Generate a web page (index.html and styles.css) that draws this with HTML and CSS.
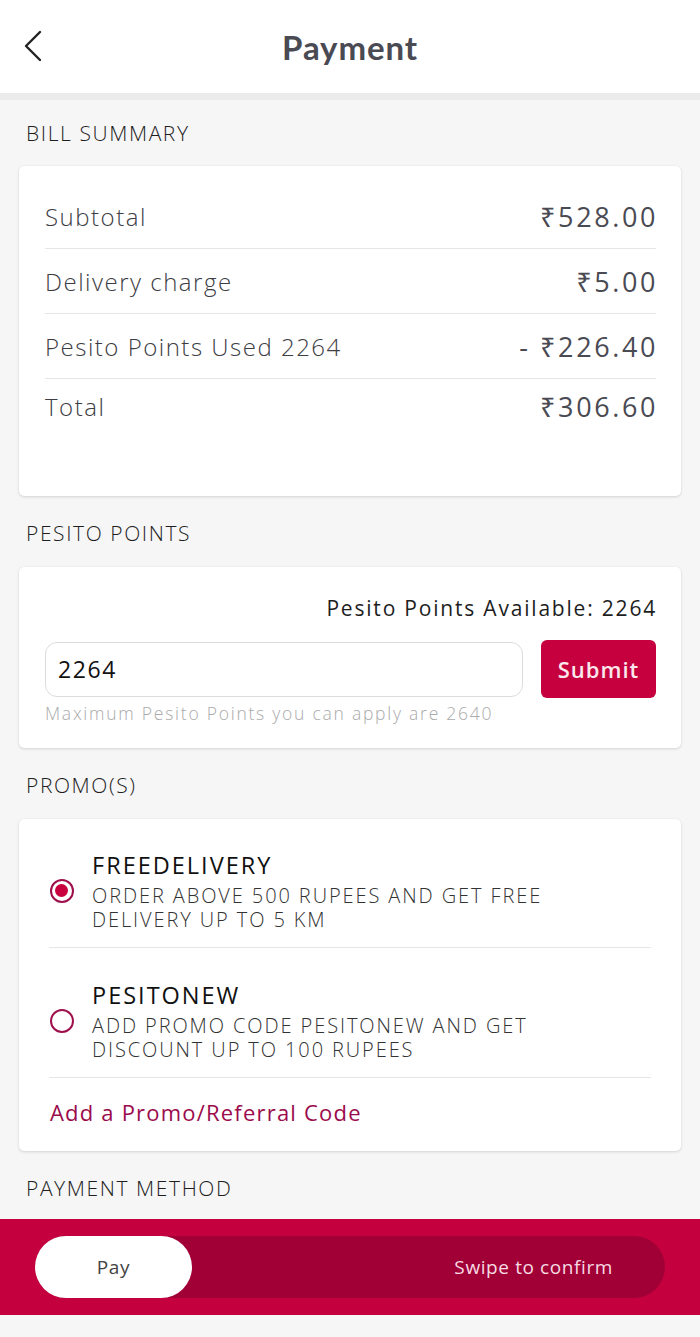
FILE: index.html
```html
<!DOCTYPE html>
<html lang="en">
<head>
<meta charset="utf-8">
<title>Payment</title>
<link rel="stylesheet" href="styles.css">
</head>
<body>
<div class="screen">
  <header class="topbar">
    <button class="back" aria-label="Back">
      <svg width="24" height="34" viewBox="0 0 24 34"><path d="M17 3 L3 17 L17 31" fill="none" stroke="#222" stroke-width="2.4" stroke-linecap="round" stroke-linejoin="round"/></svg>
    </button>
    <h1 class="title">Payment</h1>
  </header>

  <main class="content">
    <div class="section-title first">BILL SUMMARY</div>
    <section class="card bill">
      <div class="bill-row"><span class="label">Subtotal</span><span class="value">₹528.00</span></div>
      <div class="bill-row"><span class="label">Delivery charge</span><span class="value">₹5.00</span></div>
      <div class="bill-row"><span class="label">Pesito Points Used 2264</span><span class="value">- ₹226.40</span></div>
      <div class="bill-row last"><span class="label">Total</span><span class="value">₹306.60</span></div>
    </section>

    <div class="section-title">PESITO POINTS</div>
    <section class="card points">
      <div class="available">Pesito Points Available: 2264</div>
      <div class="points-row">
        <div class="input">2264</div>
        <button class="submit">Submit</button>
      </div>
      <div class="helper">Maximum Pesito Points you can apply are 2640</div>
    </section>

    <div class="section-title">PROMO(S)</div>
    <section class="card promos">
      <div class="promo first-promo">
        <span class="radio checked"></span>
        <div class="promo-text">
          <div class="promo-name">FREEDELIVERY</div>
          <div class="promo-desc">ORDER ABOVE 500 RUPEES AND GET FREE</div>
          <div class="promo-desc">DELIVERY UP TO 5 KM</div>
        </div>
      </div>
      <div class="promo">
        <span class="radio"></span>
        <div class="promo-text">
          <div class="promo-name">PESITONEW</div>
          <div class="promo-desc">ADD PROMO CODE PESITONEW AND GET</div>
          <div class="promo-desc">DISCOUNT UP TO 100 RUPEES</div>
        </div>
      </div>
      <div class="promo-link">Add a Promo/Referral Code</div>
    </section>

    <div class="section-title last-title">PAYMENT METHOD</div>
  </main>

  <footer class="paybar">
    <div class="track">
      <div class="thumb">Pay</div>
      <div class="swipe">Swipe to confirm</div>
    </div>
  </footer>
</div>
</body>
</html>
```

FILE: styles.css
```css
* { box-sizing: border-box; }
html, body { margin: 0; padding: 0; }
body {
  background: #f6f6f6;
  font-family: "Open Sans", "Noto Sans", "DejaVu Sans", sans-serif;
  font-weight: 300;
  color: #222;
  width: 700px;
  min-height: 1337px;
}
.screen { width: 700px; }

.topbar {
  height: 100px;
  background: #fff;
  border-bottom: 7px solid #ebebeb;
  display: flex;
  align-items: center;
  justify-content: center;
  position: relative;
}
.back {
  position: absolute;
  left: 23px;
  top: 29px;
  border: 0;
  background: none;
  padding: 0;
  width: 24px;
  height: 34px;
}
.title {
  margin: 0;
  font-family: "Lato", "Open Sans", sans-serif;
  font-weight: 700;
  font-size: 33px;
  color: #4a4a53;
  letter-spacing: 0.9px;
}

.section-title {
  font-size: 21px;
  line-height: 24px;
  padding: 25px 26px 22px;
  color: #1e1e1e;
  letter-spacing: 1.6px;
}
.section-title.first { padding-top: 21px; padding-bottom: 21px; }
.section-title.last-title { padding-bottom: 19px; }

.card {
  margin: 0 19px;
  background: #fff;
  border-radius: 5px;
  box-shadow: 0 1px 3px rgba(0,0,0,0.14), 0 0 1px rgba(0,0,0,0.08);
}

.bill { padding: 18px 25px 63px 26px; }
.bill-row {
  height: 65px;
  display: flex;
  align-items: center;
  justify-content: space-between;
  border-bottom: 1.5px solid #e6e6e6;
}
.bill-row.last { height: 54px; border-bottom: 0; }
.bill-row .label { font-size: 24px; color: #3d3d44; letter-spacing: 1.5px; }
.bill-row .value { font-size: 27px; color: #4a4a53; font-weight: 400; letter-spacing: 2.6px; margin-right: -2px; }

.points { padding: 28px 25px 25px 26px; }
.available { text-align: right; font-size: 21px; line-height: 26px; color: #1e1e1e; font-weight: 400; letter-spacing: 1.8px; margin-right: -1px; }
.points-row { margin-top: 19px; display: flex; align-items: center; gap: 18px; height: 58px; }
.input {
  flex: 1;
  height: 55px;
  border: 1.5px solid #dcdcdc;
  border-radius: 12px;
  display: flex;
  align-items: center;
  padding-left: 12px;
  font-size: 23px;
  font-weight: 400;
  letter-spacing: 1.6px;
  color: #111;
}
.submit {
  width: 115px;
  height: 58px;
  border: 0;
  border-radius: 6px;
  background: #c6003f;
  color: #fbe7ec;
  font-family: "Open Sans", sans-serif;
  font-weight: 600;
  font-size: 22px;
  letter-spacing: 1px;
  padding: 0;
}
.helper { margin-top: 5px; font-size: 17.5px; line-height: 20px; color: #aaaaaa; letter-spacing: 1.75px; }

.promos { padding: 0 30px; }
.promo {
  display: flex;
  align-items: center;
  gap: 18px;
  padding: 32px 0 15px 1px;
  border-bottom: 1.5px solid #e6e6e6;
}
.promo.first-promo { padding-top: 31px; }
.radio {
  width: 24px;
  height: 24px;
  border-radius: 50%;
  border: 2px solid #9e0f4b;
  flex: none;
  position: relative;
}
.radio.checked { border: 2.5px solid #9e0f4b; }
.radio.checked::after {
  content: "";
  position: absolute;
  left: 3px; top: 3px;
  width: 13px; height: 13px;
  border-radius: 50%;
  background: #c8003f;
}
.promo-name { font-size: 23.5px; line-height: 30px; font-weight: 500; color: #111; letter-spacing: 2px; margin-bottom: 4px; }
.promo-desc { font-size: 20px; line-height: 24px; color: #333; letter-spacing: 1.9px; }
.promo-link { padding: 21px 0 26px 1px; font-size: 22px; line-height: 26px; color: #9b0b4c; font-weight: 400; letter-spacing: 1.2px; }

.paybar {
  height: 96px;
  background: #c5003e;
  padding: 17px 35px;
}
.track {
  height: 62px;
  border-radius: 31px;
  background: #a10037;
  display: flex;
  align-items: center;
  justify-content: space-between;
  padding-right: 52px;
}
.thumb {
  width: 157px;
  height: 62px;
  border-radius: 31px;
  background: #fff;
  display: flex;
  align-items: center;
  justify-content: center;
  font-size: 19px;
  color: #444;
  font-weight: 400;
  letter-spacing: 0.6px;
}
.swipe { font-size: 19px; color: #f6dbe2; font-weight: 400; letter-spacing: 0.6px; }
```
